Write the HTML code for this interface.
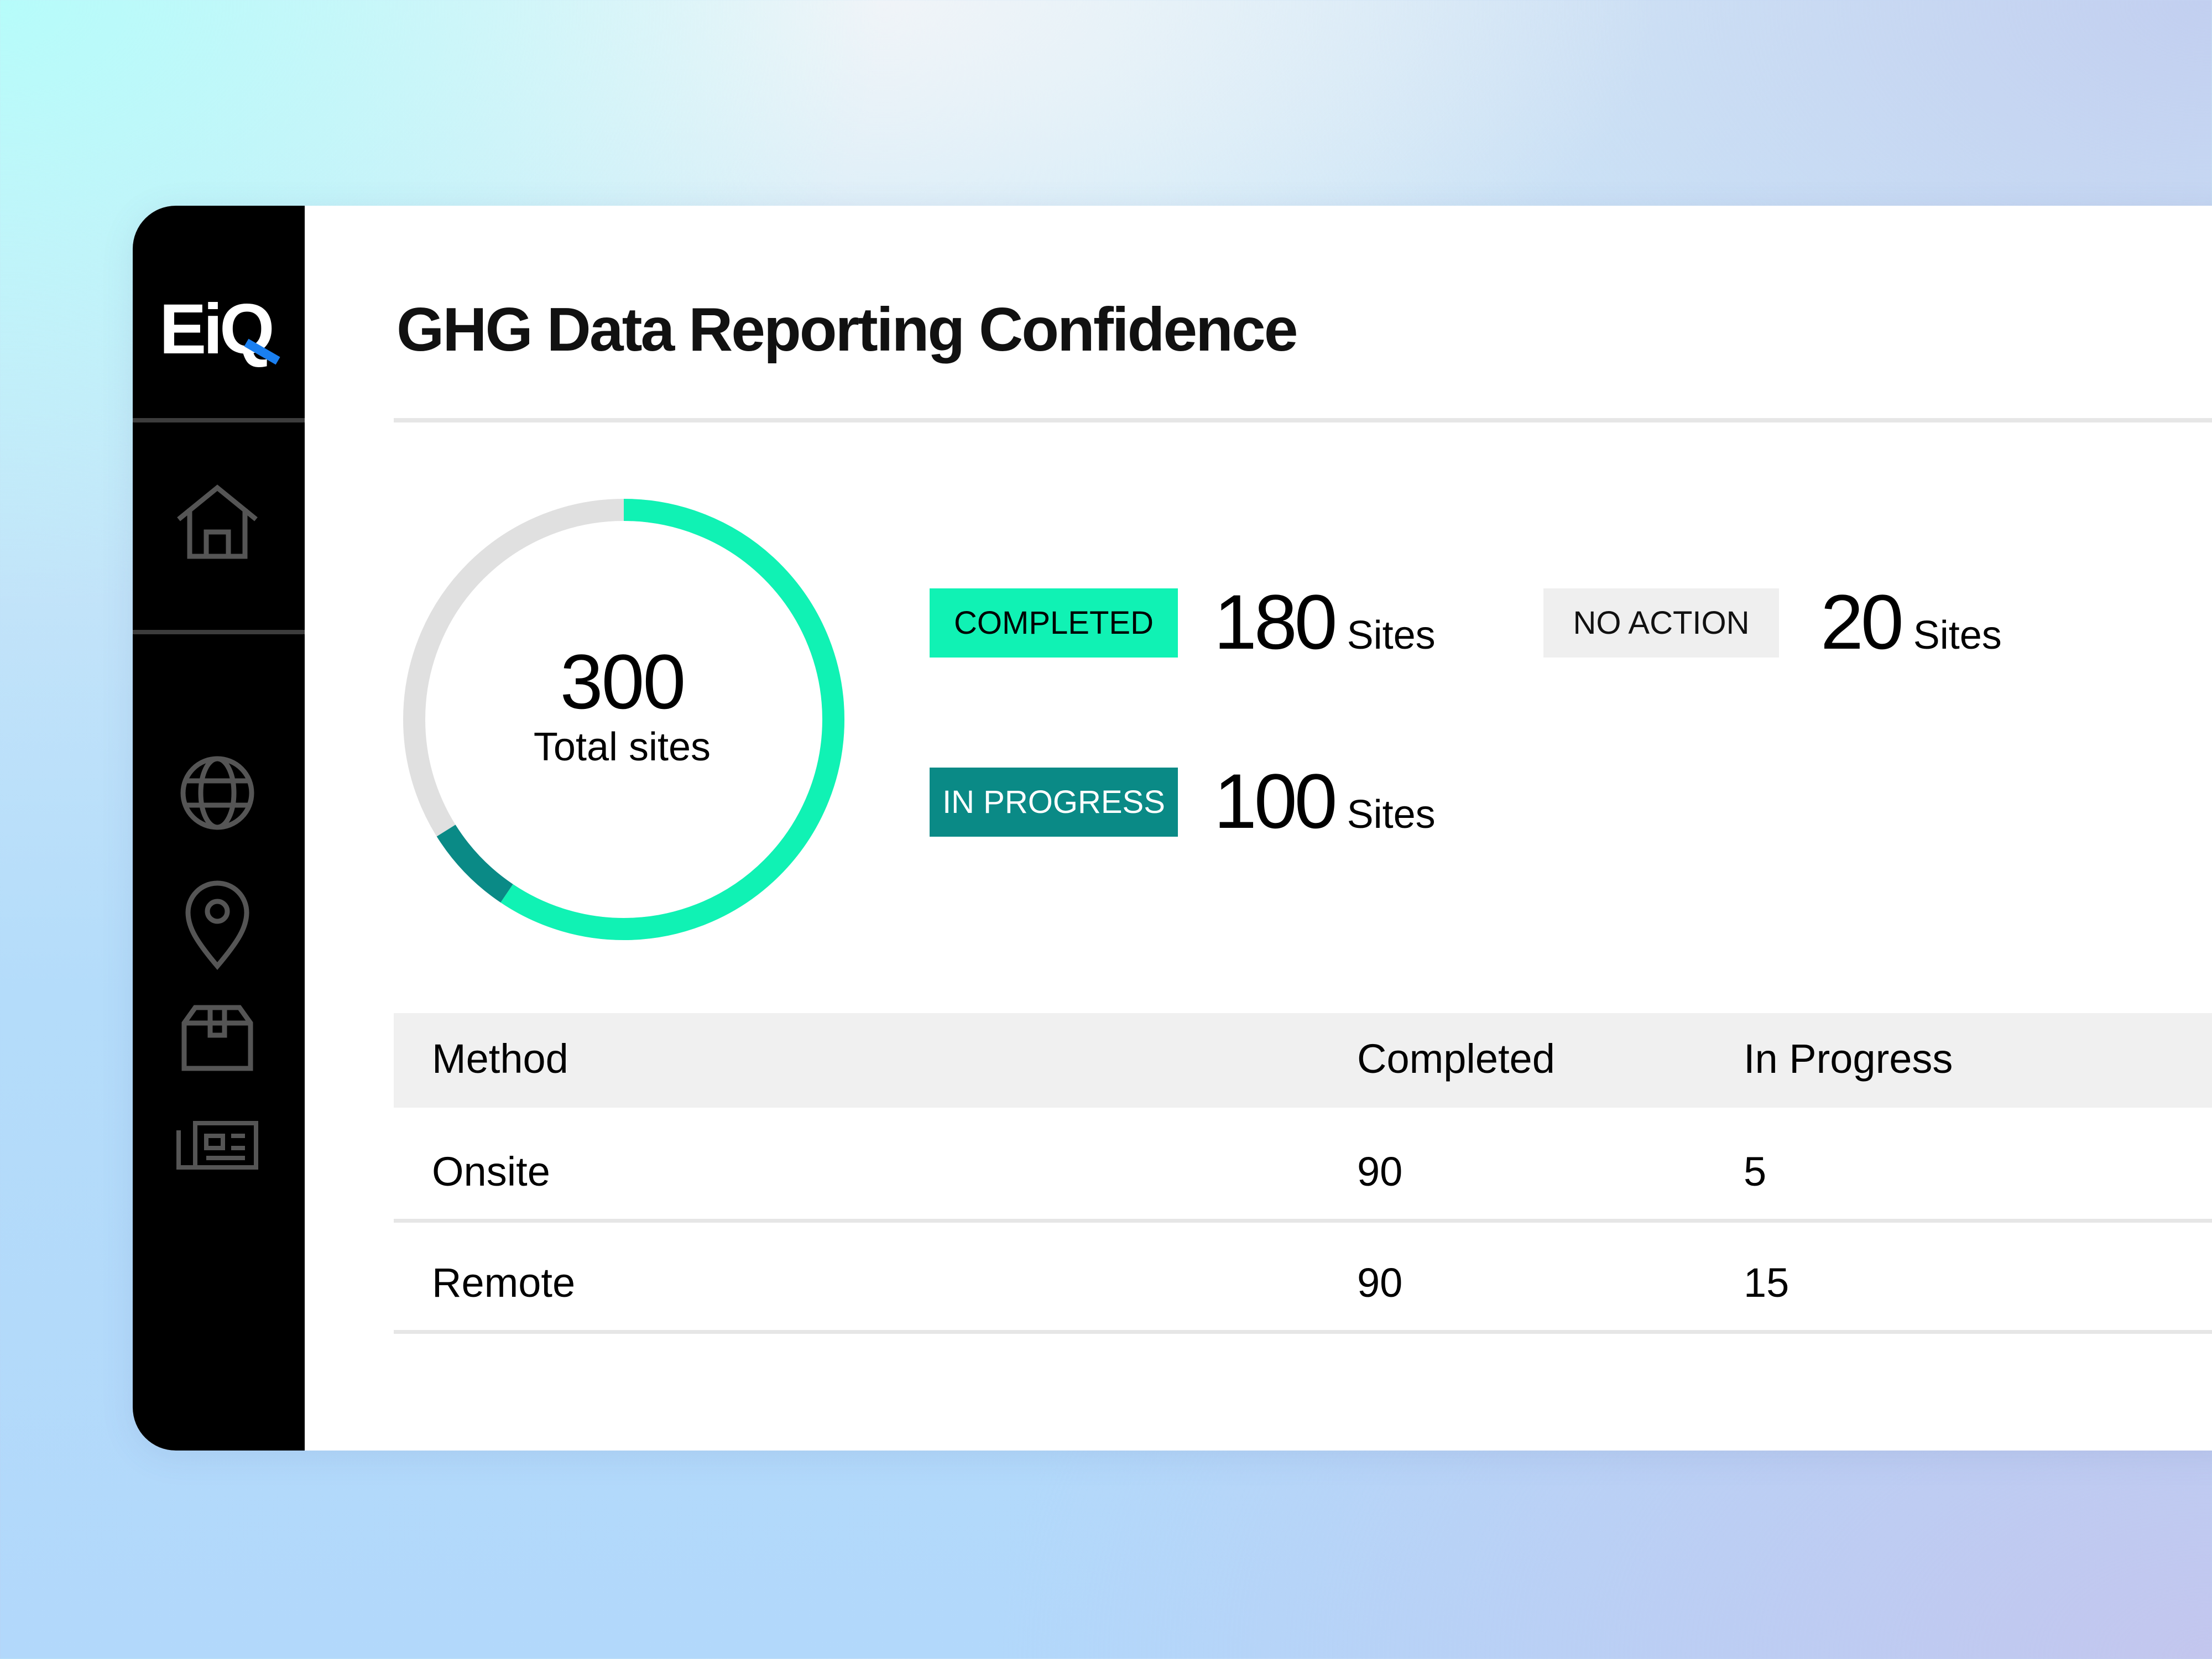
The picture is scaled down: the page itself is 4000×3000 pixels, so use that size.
<!DOCTYPE html>
<html><head><meta charset="utf-8"><style>
*{margin:0;padding:0;box-sizing:border-box}
html,body{width:4000px;height:3000px;overflow:hidden}
body{position:relative;font-family:"Liberation Sans",sans-serif;color:#000;
background:
radial-gradient(ellipse 1600px 1100px at 0% 0%, #b6fcfa 0%, rgba(182,252,250,0) 100%),
radial-gradient(ellipse 1400px 700px at 40% 0%, #f0f4f8 0%, rgba(240,244,248,0) 100%),
radial-gradient(ellipse 2000px 1300px at 100% 0%, #c2cff0 0%, rgba(194,207,240,0) 100%),
radial-gradient(ellipse 2200px 1400px at 100% 100%, #c3c6ee 0%, rgba(195,198,238,0) 100%),
linear-gradient(180deg,#d6eef8 0%,#b4dcfa 60%,#b2d8fb 100%);}
.card{position:absolute;left:240px;top:372px;width:3800px;height:2251px;background:#fff;border-radius:78px 0 0 78px;overflow:hidden;box-shadow:0 10px 60px rgba(80,100,160,.12)}
.side{position:absolute;left:0;top:0;width:311px;height:100%;background:#000}
.div{position:absolute;left:0;width:311px;height:8px;background:#3c3c3c}
.abs{position:absolute;white-space:nowrap}
.badge{position:absolute;width:449px;height:125px;font-size:58px;display:flex;align-items:center;justify-content:center}
.big{font-size:140px;letter-spacing:-5px}
.sm{font-size:72px;letter-spacing:0;margin-left:22px}
.line{position:absolute;left:472px;right:0;height:7px;background:#e6e6e6}
.t{position:absolute;font-size:74px}
</style></head><body>
<div class="card">
 <div class="side">
  <div class="abs" style="left:48px;top:150px;font-size:128px;font-weight:bold;color:#fff;letter-spacing:-6px">Ei<span style="position:relative">Q<span style="position:absolute;left:44px;top:104px;width:66px;height:16px;background:#1a7ff0;transform:rotate(30deg)"></span></span></div>
  <div class="div" style="top:384px"></div>
  <div class="div" style="top:767px"></div>
  <svg class="abs" style="left:0;top:0" width="311" height="2251" fill="none" stroke="#555" stroke-width="9">
   <path d="M83 567 L153 510 L223 567 M103 548 V634 H203 V548 M133 634 V590 H173 V634"/>
   <circle cx="153" cy="1062" r="62"/><ellipse cx="153" cy="1062" rx="30" ry="62"/><path d="M93 1040 H213 M93 1084 H213"/>
   <path d="M153 1375 C115 1330 100 1305 100 1278 A53 53 0 0 1 206 1278 C206 1305 191 1330 153 1375 Z"/><circle cx="153" cy="1276" r="18"/>
   <path d="M93 1478 L113 1450 H193 L213 1478 V1560 H93 Z M93 1478 H213 M140 1450 V1500 H166 V1450"/>
   <path d="M83 1672 V1739 H223 V1659 H113 V1739 M133 1682 H163 V1704 H133 Z M178 1682 H203 M178 1704 H203 M133 1722 H203" stroke-width="8"/>
  </svg>
 </div>
 <div class="abs" style="left:477px;top:160px;font-size:111px;font-weight:bold;letter-spacing:-3px;color:#111">GHG Data Reporting Confidence</div>
 <div class="line" style="top:384px;height:8px"></div>
 <svg class="abs" style="left:487px;top:528px" width="802" height="802">
  <g transform="translate(401 401) rotate(-90)" fill="none" stroke-width="40">
   <circle r="379" stroke="#e0e0e0"/>
   <circle r="379" stroke="#10f2b4" stroke-dasharray="1415 3000"/>
   <circle r="379" stroke="#0a8a86" stroke-dasharray="0 1415 159 3000"/>
  </g>
 </svg>
 <div class="abs" style="left:485px;top:780px;width:800px;text-align:center;font-size:140px;letter-spacing:-3px">300</div>
 <div class="abs" style="left:485px;top:938px;width:800px;text-align:center;font-size:72px">Total sites</div>
 <div class="badge" style="left:1441px;top:692px;background:#10f2b4;color:#000">COMPLETED</div>
 <div class="badge" style="left:1441px;top:1016px;background:#0a8a86;color:#fff">IN PROGRESS</div>
 <div class="badge" style="left:2551px;top:692px;width:426px;background:#efefef;color:#111">NO ACTION</div>
 <div class="abs" style="left:1955px;top:672px"><span class="big">180</span><span class="sm">Sites</span></div>
 <div class="abs" style="left:1955px;top:996px"><span class="big">100</span><span class="sm">Sites</span></div>
 <div class="abs" style="left:3052px;top:672px"><span class="big">20</span><span class="sm">Sites</span></div>
 <div class="abs" style="left:472px;top:1460px;right:0;height:171px;background:#f0f0f0"></div>
 <div class="t" style="left:541px;top:1500px">Method</div>
 <div class="t" style="left:2214px;top:1500px">Completed</div>
 <div class="t" style="left:2913px;top:1500px">In Progress</div>
 <div class="t" style="left:541px;top:1704px">Onsite</div>
 <div class="t" style="left:2214px;top:1704px">90</div>
 <div class="t" style="left:2913px;top:1704px">5</div>
 <div class="line" style="top:1832px"></div>
 <div class="t" style="left:541px;top:1905px">Remote</div>
 <div class="t" style="left:2214px;top:1905px">90</div>
 <div class="t" style="left:2913px;top:1905px">15</div>
 <div class="line" style="top:2033px"></div>
</div>
</body></html>
